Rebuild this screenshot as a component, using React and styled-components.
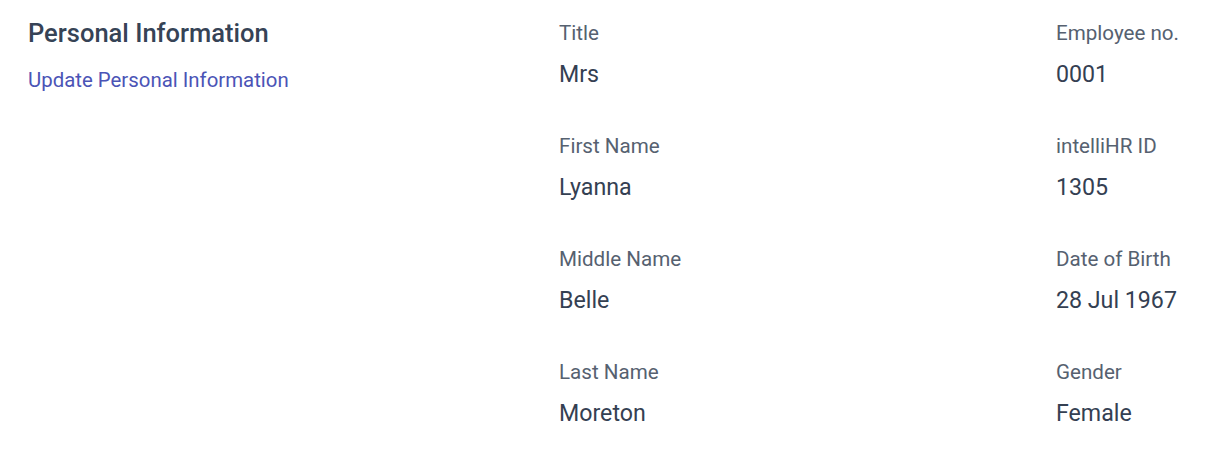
import { createGlobalStyle, styled } from 'styled-components';

const GlobalStyle = createGlobalStyle`
  body {
    margin: 0;
    background: #fff;
    font-family: Roboto, "Liberation Sans", sans-serif;
  }
`;

const Section = styled.section`
  display: grid;
  grid-template-columns: 531px 497px 1fr;
  padding: 19px 0 0 28px;
`;

const Intro = styled.div`
  display: flex;
  flex-direction: column;
  gap: 19px;
`;

const Heading = styled.h2`
  margin: 0;
  font-size: 25.5px;
  font-weight: 500;
  line-height: 28px;
  color: #364356;
`;

const UpdateLink = styled.a`
  font-size: 20.4px;
  line-height: 28px;
  color: #4b54b6;
  text-decoration: none;
  cursor: pointer;
`;

const FieldList = styled.dl`
  margin: 0;
  display: flex;
  flex-direction: column;
  gap: 44px;
`;

const Field = styled.div`
  display: flex;
  flex-direction: column;
  gap: 13px;
`;

const Label = styled.dt`
  font-size: 20.6px;
  line-height: 28px;
  color: #566170;
`;

const Value = styled.dd`
  margin: 0;
  font-size: 23.2px;
  line-height: 28px;
  color: #344052;
`;

const left = [
  ['Title', 'Mrs'],
  ['First Name', 'Lyanna'],
  ['Middle Name', 'Belle'],
  ['Last Name', 'Moreton'],
];

const right = [
  ['Employee no.', '0001'],
  ['intelliHR ID', '1305'],
  ['Date of Birth', '28 Jul 1967'],
  ['Gender', 'Female'],
];

function Fields({ items }) {
  return (
    <FieldList>
      {items.map(([label, value]) => (
        <Field key={label}>
          <Label>{label}</Label>
          <Value>{value}</Value>
        </Field>
      ))}
    </FieldList>
  );
}

export default function App() {
  return (
    <>
      <GlobalStyle />
      <Section>
        <Intro>
          <Heading>Personal Information</Heading>
          <UpdateLink>Update Personal Information</UpdateLink>
        </Intro>
        <Fields items={left} />
        <Fields items={right} />
      </Section>
    </>
  );
}
